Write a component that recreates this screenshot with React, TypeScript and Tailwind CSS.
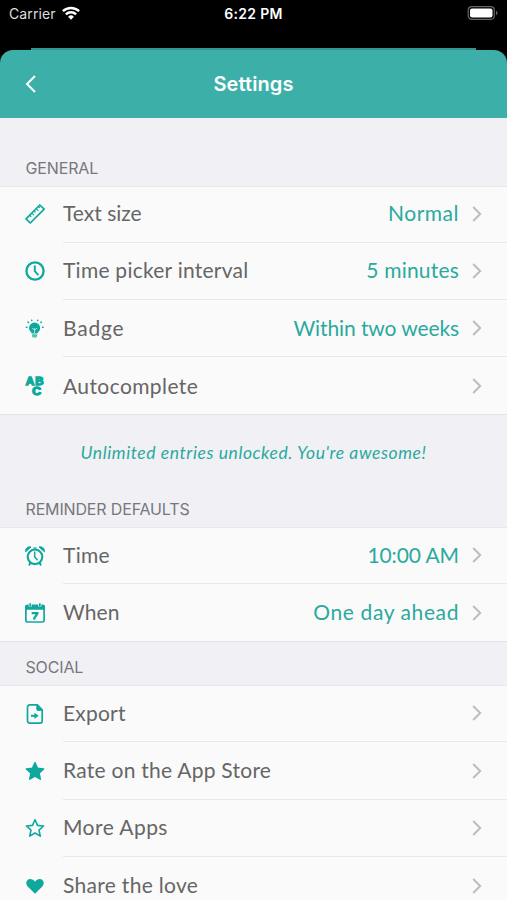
import type { ReactNode } from "react";
import clsx from "clsx";

type Row = {
  icon: ReactNode;
  label: string;
  labelClass?: string;
  value?: string;
  valueClass?: string;
};

const svgProps = {
  width: 20,
  height: 20,
  viewBox: "0 0 20 20",
  fill: "none",
  stroke: "currentColor",
};

function RulerIcon() {
  return (
    <svg {...svgProps} strokeWidth="1.7" strokeLinejoin="round">
      <path d="M1 14.8 14.8 1 19.200 5.200 5.300 19Z" />
      <path d="m4.900 11.500 1.300 1.300M7.100 9.300l1.900 1.900M9.300 7.100l1.300 1.300M11.500 4.900l1.900 1.900M13.700 2.700l1.300 1.300" strokeWidth="1.200" />
    </svg>
  );
}

function ClockIcon() {
  return (
    <svg {...svgProps}>
      <circle cx="10" cy="10" r="8.6" strokeWidth="2.300" />
      <path d="M9.800 4.500v5.700l3.600 3.900" strokeWidth="1.900" />
    </svg>
  );
}

function BulbIcon() {
  return (
    <svg {...svgProps} strokeWidth="1.500" strokeLinecap="round">
      <path
        d="M9.600 3.600a5.600 5.600 0 0 0-5.600 5.600c0 2.700 2.500 3.700 2.800 5.200h5.600c.3-1.500 2.800-2.500 2.800-5.200a5.600 5.600 0 0 0-5.600-5.600Z"
        fill="currentColor"
        stroke="none"
      />
      <path d="M7 15.200h5.200v1.800a1.600 1.600 0 0 1-1.600 1.500h-2A1.600 1.600 0 0 1 7 17Z" fill="currentColor" stroke="none" opacity=".7" />
      <path d="M7.500 9.300l1.200 1.300.9-1.100.9 1.100 1.200-1.300M9.600 10.500v3.200" stroke="#fafafa" strokeWidth=".7" />
      <path d="M1.300 8.200h.6M17.500 8.200h.6M3.100 3.100l.4.400M15.900 3.500l.4-.4M6.700 1.300l.1.300M12.700 1.600l.1-.3" />
    </svg>
  );
}

function AbcIcon() {
  return (
    <svg
      width="20"
      height="20"
      viewBox="0 0 20 20"
      fill="currentColor"
      stroke="currentColor"
      strokeWidth="1.300"
      className="font-['Liberation_Sans',sans-serif] font-bold"
    >
      <text x=".8" y="9" fontSize="10.5" textLength="8.500" lengthAdjust="spacingAndGlyphs">A</text>
      <text x="10.300" y="9" fontSize="10.5" textLength="8.300" lengthAdjust="spacingAndGlyphs">B</text>
      <text x="7.300" y="18.500" fontSize="10.5" textLength="8.800" lengthAdjust="spacingAndGlyphs">C</text>
    </svg>
  );
}

function AlarmIcon() {
  return (
    <svg {...svgProps}>
      <circle cx="10" cy="10.800" r="7.300" strokeWidth="2.100" />
      <path d="M9.700 5.600v5.400l2.900 3.300" strokeWidth="1.500" />
      <path d="M.6 5.800C.2 2.600 2.400.3 6 1ZM19.400 5.800C19.800 2.600 17.600.3 14 1Z" fill="currentColor" strokeWidth="1" strokeLinejoin="round" />
      <path d="m5.300 16.800-.9 1.900M14.700 16.800l.9 1.900" strokeWidth="2" strokeLinecap="round" />
      <path d="M8.400 2h3.200" strokeWidth="1.200" />
    </svg>
  );
}

function CalendarIcon() {
  return (
    <svg {...svgProps}>
      <rect x=".9" y="2.400" width="18.200" height="16.600" rx="1.600" strokeWidth="1.700" />
      <path d="M.2 6.800V3.200c0-.8.5-1.200 1.200-1.200h17.200c.7 0 1.200.4 1.200 1.200v3.600Z" fill="currentColor" stroke="none" />
      <path d="M5.200.4v3.200M14.800.4v3.200" stroke="#fafafa" strokeWidth="3" />
      <path d="M5.200.2v3M14.800.2v3" strokeWidth="1.700" />
      <path d="M6.700 10.200h5.700c-.1 1.900-3 3-3.400 6.400" strokeWidth="2.300" />
    </svg>
  );
}

function ExportIcon() {
  return (
    <svg {...svgProps} strokeWidth="1.700" strokeLinejoin="round">
      <path d="M4.800.9h7.500l4.900 4.900v10.900c0 1.300-.9 2.400-2.300 2.400H4.800c-1.300 0-2.300-1.100-2.300-2.400V3.300C2.500 2 3.500.9 4.800.9Z" />
      <path d="M11.700 1v4.200c0 .9.5 1.300 1.300 1.300h4.200Z" fill="currentColor" strokeWidth=".8" />
      <path d="M6 11.800h4" strokeWidth="2" />
      <path d="m9.700 9.200 3.700 2.600-3.700 2.600Z" fill="currentColor" strokeWidth=".5" />
    </svg>
  );
}

function StarIcon({ filled }: { filled?: boolean }) {
  return (
    <svg {...svgProps} strokeWidth="1.600" strokeLinejoin="round">
      <path
        d="m10 1.700 2.500 5.700 6.100.6-4.600 4.100 1.300 6L10 15l-5.300 3.100 1.300-6L1.400 8l6.100-.6Z"
        fill={filled ? "currentColor" : "none"}
      />
    </svg>
  );
}

function HeartIcon() {
  return (
    <svg {...svgProps} fill="currentColor" stroke="none">
      <path d="M10 17.700 2.900 10.800C-.3 7.300 1.700 3.100 5.200 3.100c2.100 0 3.700 1 4.800 2.700 1.100-1.700 2.700-2.700 4.800-2.700 3.500 0 5.500 4.200 2.300 7.700Z" />
    </svg>
  );
}

const general: Row[] = [
  { icon: <RulerIcon />, label: "Text size", labelClass: "tracking-[0px]", value: "Normal", valueClass: "tracking-[0.5px]" },
  { icon: <ClockIcon />, label: "Time picker interval", labelClass: "tracking-[0.25px]", value: "5 minutes", valueClass: "tracking-[0.2px]" },
  { icon: <BulbIcon />, label: "Badge", labelClass: "tracking-[0.8px]", value: "Within two weeks", valueClass: "tracking-[-0.1px]" },
  { icon: <AbcIcon />, label: "Autocomplete", labelClass: "tracking-[0.4px]" },
];

const reminders: Row[] = [
  { icon: <AlarmIcon />, label: "Time", labelClass: "tracking-[0.3px]", value: "10:00 AM", valueClass: "tracking-[-0.1px]" },
  { icon: <CalendarIcon />, label: "When", labelClass: "tracking-[0.1px]", value: "One day ahead", valueClass: "tracking-[0.6px]" },
];

const social: Row[] = [
  { icon: <ExportIcon />, label: "Export", labelClass: "tracking-[0.2px]" },
  { icon: <StarIcon filled />, label: "Rate on the App Store", labelClass: "tracking-[0.250px]" },
  { icon: <StarIcon />, label: "More Apps", labelClass: "tracking-[0.450px]" },
  { icon: <HeartIcon />, label: "Share the love", labelClass: "tracking-[0.3px]" },
];

function SettingsList({ rows }: { rows: Row[] }) {
  return (
    <div className="bg-[#fafafa] shadow-[inset_0_1px_#e8e8eb,inset_0_-1px_#e3e3e6]">
      {rows.map((row, i) => (
        <div key={row.label} className="flex h-[57.33px] pl-[25px]">
          <span className="flex w-[38px] shrink-0 items-center text-[#0fa89c]">{row.icon}</span>
          <div
            className={clsx(
              "flex grow items-center justify-between pr-[25px] font-['Lato',sans-serif] text-[21px] leading-none whitespace-nowrap",
              i < rows.length - 1 && "border-b border-[#e9e9eb]"
            )}
          >
            <span className={clsx("pb-[2px] text-[#666]", row.labelClass)}>{row.label}</span>
            <span className="flex items-center">
              {row.value && <span className={clsx("pb-[2px] text-[#2aa99e]", row.valueClass)}>{row.value}</span>}
              <svg width="10" height="16" viewBox="0 0 10 16" fill="none" stroke="#bdbdbf" strokeWidth="2" className="ml-[13px]">
                <path d="m1.200 1 7 7-7 7" />
              </svg>
            </span>
          </div>
        </div>
      ))}
    </div>
  );
}

function SectionTitle({ children, className }: { children: ReactNode; className?: string }) {
  return (
    <h2 className={clsx("flex items-end pl-[25.5px] text-[16px] leading-5 tracking-[-0.15px] text-[#77777c]", className)}>
      {children}
    </h2>
  );
}

function App() {
  return (
    <main className="h-[900px] w-[507px] overflow-hidden bg-black font-['Inter',sans-serif]">
      {/* Status bar */}
      <div className="grid h-[48px] grid-cols-3 items-start px-[9px] pt-[4px] text-[14px] leading-5 text-white">
        <div className="flex items-center gap-1.5">
          <span className="tracking-[0.1px] text-[#dedede]">Carrier</span>
          <svg width="18" height="14" viewBox="0 0 18 14" fill="none" stroke="#fff" strokeWidth="2.500" className="-mt-[2px]">
            <path d="M.9 5.200a11.600 11.600 0 0 1 16.200 0M3.900 8.400a7.300 7.300 0 0 1 10.200 0" />
            <path d="m9 13.800-2.900-3.100a4.200 4.200 0 0 1 5.800 0Z" fill="#fff" stroke="none" />
          </svg>
        </div>
        <span className="text-center font-semibold tracking-[0.3px]">6:22 PM</span>
        <div className="flex justify-end pt-[2px]">
          <svg width="31" height="14" viewBox="0 0 31 14" fill="none">
            <rect x="1.200" y=".7" width="26.100" height="12.600" rx="3.500" stroke="#666" strokeWidth="1.200" />
            <rect x="3" y="2.500" width="22.500" height="9" rx="2" fill="#fff" />
            <path d="M29 4.800c2 .9 2 3.500 0 4.400Z" fill="#666" />
          </svg>
        </div>
      </div>

      {/* Edge of the card underneath */}
      <div className="mx-[31px] h-[2px] bg-[#34958e]" />

      <div className="bg-[#f1f1f5]">
        <div className="bg-black">
          <header className="grid h-[68px] grid-cols-[1fr_auto_1fr] items-center rounded-t-[13px] bg-[#3cb0a8] px-[25px] text-white">
            <svg width="12" height="18" viewBox="0 0 12 18" fill="none" stroke="currentColor" strokeWidth="2">
              <path d="M10 1 2 9l8 8" />
            </svg>
            <h1 className="text-[20px] font-semibold tracking-[0.1px]">Settings</h1>
            <span />
          </header>
        </div>

        <SectionTitle className="h-[67.5px] pb-[8px]">GENERAL</SectionTitle>
        <SettingsList rows={general} />

        <p className="h-[49px] pt-[27px] text-center font-['Lato',sans-serif] text-[17.5px] leading-[22px] tracking-[0.58px] text-[#2aa99e] italic">
          Unlimited entries unlocked. You're awesome!
        </p>

        <SectionTitle className="h-[63.2px] pb-[8px]">REMINDER DEFAULTS</SectionTitle>
        <SettingsList rows={reminders} />

        <SectionTitle className="h-[43.500px] pb-[8px]">SOCIAL</SectionTitle>
        <SettingsList rows={social} />
      </div>
    </main>
  );
}

export default App;
